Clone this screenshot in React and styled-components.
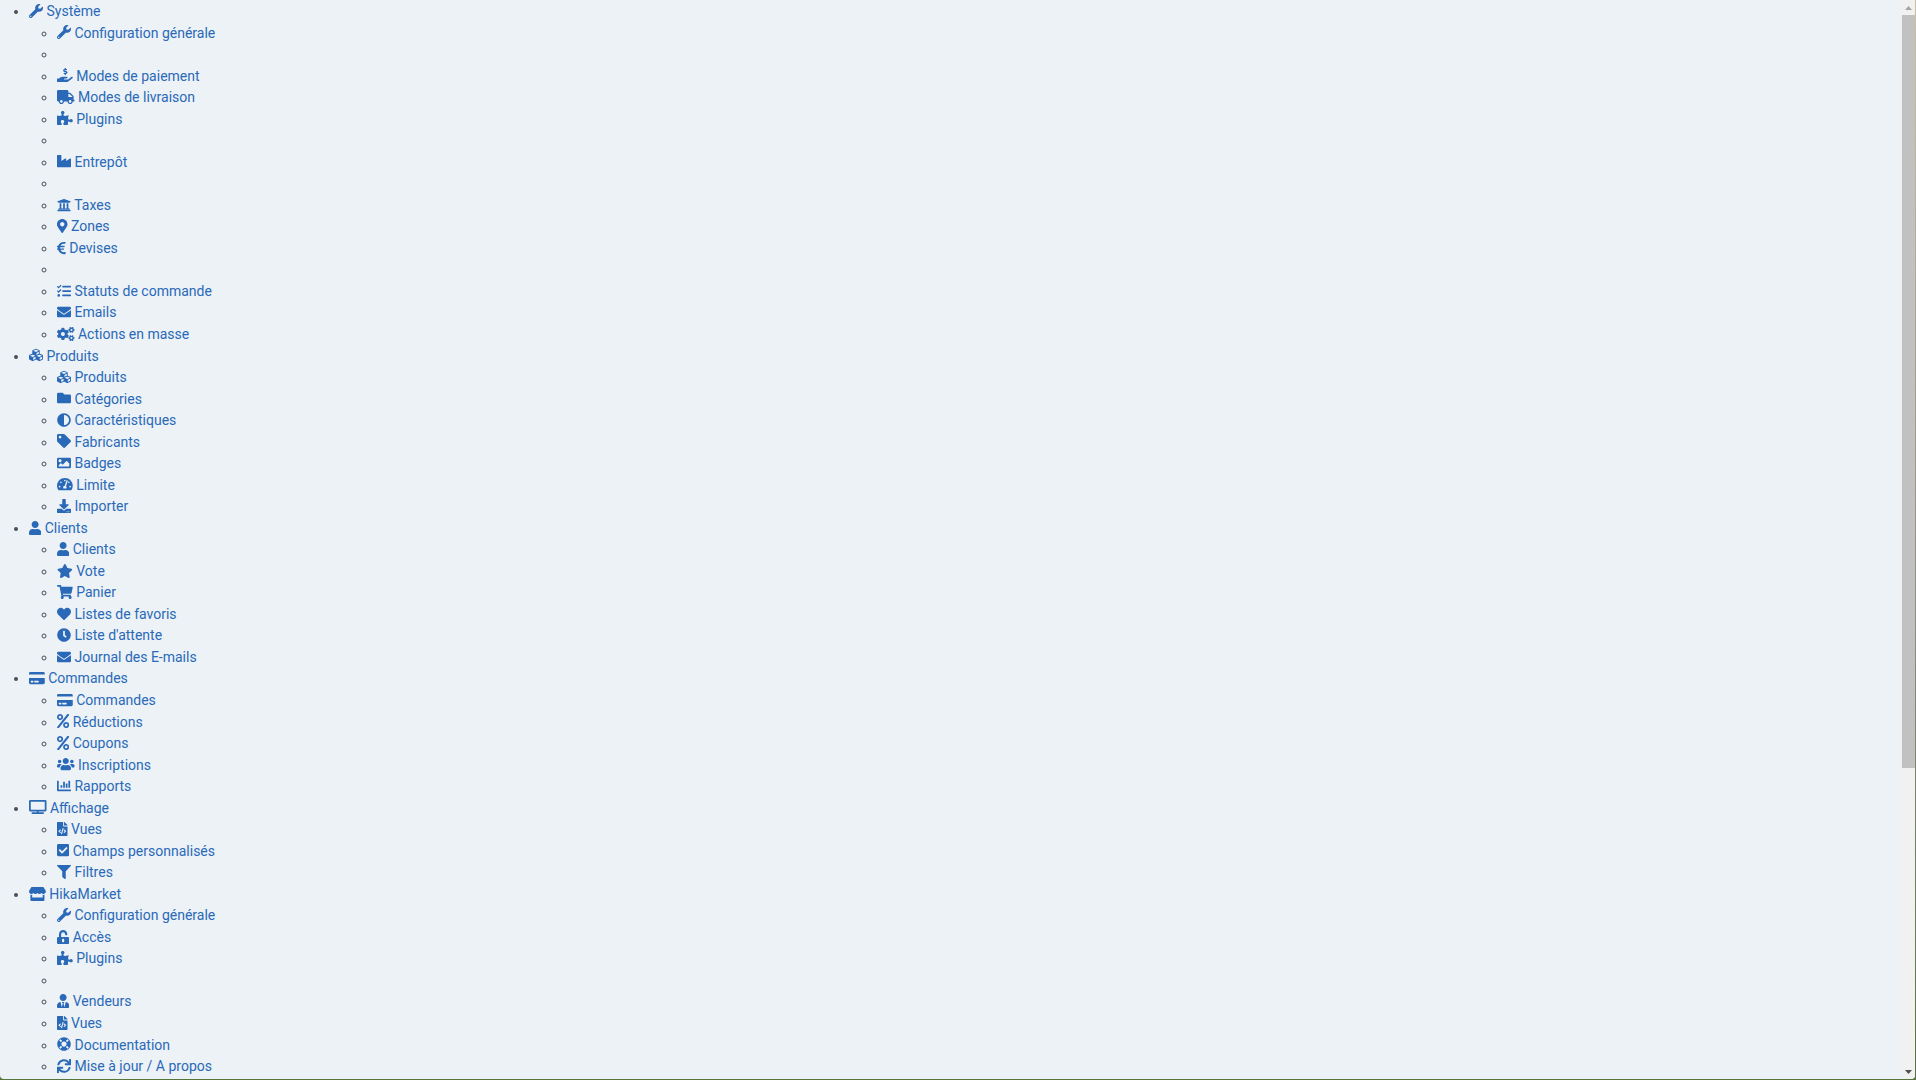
import React from "react";
import styled, { createGlobalStyle } from "styled-components";
import {
  FaAdjust,
  FaChartBar,
  FaCheckSquare,
  FaClock,
  FaCogs,
  FaCreditCard,
  FaCubes,
  FaDownload,
  FaEnvelope,
  FaEuroSign,
  FaFileCode,
  FaFilter,
  FaFolder,
  FaHandHoldingUsd,
  FaHeart,
  FaImage,
  FaIndustry,
  FaLifeRing,
  FaMapMarkerAlt,
  FaPercent,
  FaPuzzlePiece,
  FaShoppingCart,
  FaStar,
  FaStore,
  FaSync,
  FaTachometerAlt,
  FaTag,
  FaTasks,
  FaTruck,
  FaTv,
  FaUniversity,
  FaUnlockAlt,
  FaUser,
  FaUserTie,
  FaUsers,
  FaWrench,
} from "react-icons/fa";

const GlobalStyle = createGlobalStyle`
  * {
    box-sizing: border-box;
  }
  body {
    margin: 0;
    background: #56683f;
    font-family: Roboto, "Liberation Sans", sans-serif;
    font-size: 14px;
    line-height: 1.538;
    color: #495057;
  }
`;
const Screen = styled.div`
  display: flex;
  height: 100vh;
  padding: 0 1px 1px 0;
  background: linear-gradient(#c9c19c, #8a8a78 60%, #56753a);
`;
const Window = styled.div`
  flex: 1;
  display: flex;
  overflow: hidden;
  background: #ecf2f6;
  border-radius: 0 0 4px 4px;
`;
const Nav = styled.nav`
  flex: 1;
  padding-top: 1px;
  overflow: hidden;
`;
const Menu = styled.ul`
  margin: 0;
  padding-left: 29px;
  list-style: disc;
`;
const SubMenu = styled.ul`
  margin: 0;
  padding-left: 28px;
  list-style: circle;
`;
const Item = styled.li``;
const Separator = styled.li`
  &::after {
    content: "\\00a0";
  }
`;
const Link = styled.a`
  color: #2a69b8;
  text-decoration: none;
  svg {
    width: auto;
    height: 1em;
    vertical-align: -0.125em;
  }
`;
const ScrollBar = styled.div`
  width: 13px;
  display: flex;
  flex-direction: column;
  background: #f1f1f1;
`;
const ScrollButton = styled.button`
  height: 15px;
  padding: 0;
  border: 0;
  display: flex;
  align-items: center;
  justify-content: center;
  background: transparent;
  color: ${(props) => (props.$muted ? "#a3a3a3" : "#505050")};
`;
const Track = styled.div`
  flex: 1;
`;
const Thumb = styled.div`
  height: 71.8%;
  background: #c1c1c1;
`;

const menus = [
  {
    name: "Système",
    icon: FaWrench,
    items: [
      [FaWrench, "Configuration générale"],
      null,
      [FaHandHoldingUsd, "Modes de paiement"],
      [FaTruck, "Modes de livraison"],
      [FaPuzzlePiece, "Plugins"],
      null,
      [FaIndustry, "Entrepôt"],
      null,
      [FaUniversity, "Taxes"],
      [FaMapMarkerAlt, "Zones"],
      [FaEuroSign, "Devises"],
      null,
      [FaTasks, "Statuts de commande"],
      [FaEnvelope, "Emails"],
      [FaCogs, "Actions en masse"],
    ],
  },
  {
    name: "Produits",
    icon: FaCubes,
    items: [
      [FaCubes, "Produits"],
      [FaFolder, "Catégories"],
      [FaAdjust, "Caractéristiques"],
      [FaTag, "Fabricants"],
      [FaImage, "Badges"],
      [FaTachometerAlt, "Limite"],
      [FaDownload, "Importer"],
    ],
  },
  {
    name: "Clients",
    icon: FaUser,
    items: [
      [FaUser, "Clients"],
      [FaStar, "Vote"],
      [FaShoppingCart, "Panier"],
      [FaHeart, "Listes de favoris"],
      [FaClock, "Liste d'attente"],
      [FaEnvelope, "Journal des E-mails"],
    ],
  },
  {
    name: "Commandes",
    icon: FaCreditCard,
    items: [
      [FaCreditCard, "Commandes"],
      [FaPercent, "Réductions"],
      [FaPercent, "Coupons"],
      [FaUsers, "Inscriptions"],
      [FaChartBar, "Rapports"],
    ],
  },
  {
    name: "Affichage",
    icon: FaTv,
    items: [
      [FaFileCode, "Vues"],
      [FaCheckSquare, "Champs personnalisés"],
      [FaFilter, "Filtres"],
    ],
  },
  {
    name: "HikaMarket",
    icon: FaStore,
    items: [
      [FaWrench, "Configuration générale"],
      [FaUnlockAlt, "Accès"],
      [FaPuzzlePiece, "Plugins"],
      null,
      [FaUserTie, "Vendeurs"],
      [FaFileCode, "Vues"],
      [FaLifeRing, "Documentation"],
      [FaSync, "Mise à jour / A propos"],
    ],
  },
];

// size="auto" keeps each icon's own proportions instead of a square
function MenuLink({ icon: Icon, children }) {
  return (
    <Link href="#">
      <Icon size="auto" aria-hidden="true" /> {children}
    </Link>
  );
}

export default function App() {
  return (
    <Screen>
      <GlobalStyle />
      <Window>
        <Nav>
          <Menu>
            {menus.map((menu) => (
              <Item key={menu.name}>
                <MenuLink icon={menu.icon}>{menu.name}</MenuLink>
                <SubMenu>
                  {menu.items.map((item, i) =>
                    item ? (
                      <Item key={i}>
                        <MenuLink icon={item[0]}>{item[1]}</MenuLink>
                      </Item>
                    ) : (
                      <Separator key={i} />
                    )
                  )}
                </SubMenu>
              </Item>
            ))}
          </Menu>
        </Nav>
        <ScrollBar>
          <ScrollButton $muted aria-label="Défiler vers le haut">
            <svg width="7" height="4" viewBox="0 0 7 4">
              <path d="M0 4 3.5 0 7 4z" fill="currentColor" />
            </svg>
          </ScrollButton>
          <Track>
            <Thumb />
          </Track>
          <ScrollButton aria-label="Défiler vers le bas">
            <svg width="7" height="4" viewBox="0 0 7 4">
              <path d="M0 0 3.5 4 7 0z" fill="currentColor" />
            </svg>
          </ScrollButton>
        </ScrollBar>
      </Window>
    </Screen>
  );
}
